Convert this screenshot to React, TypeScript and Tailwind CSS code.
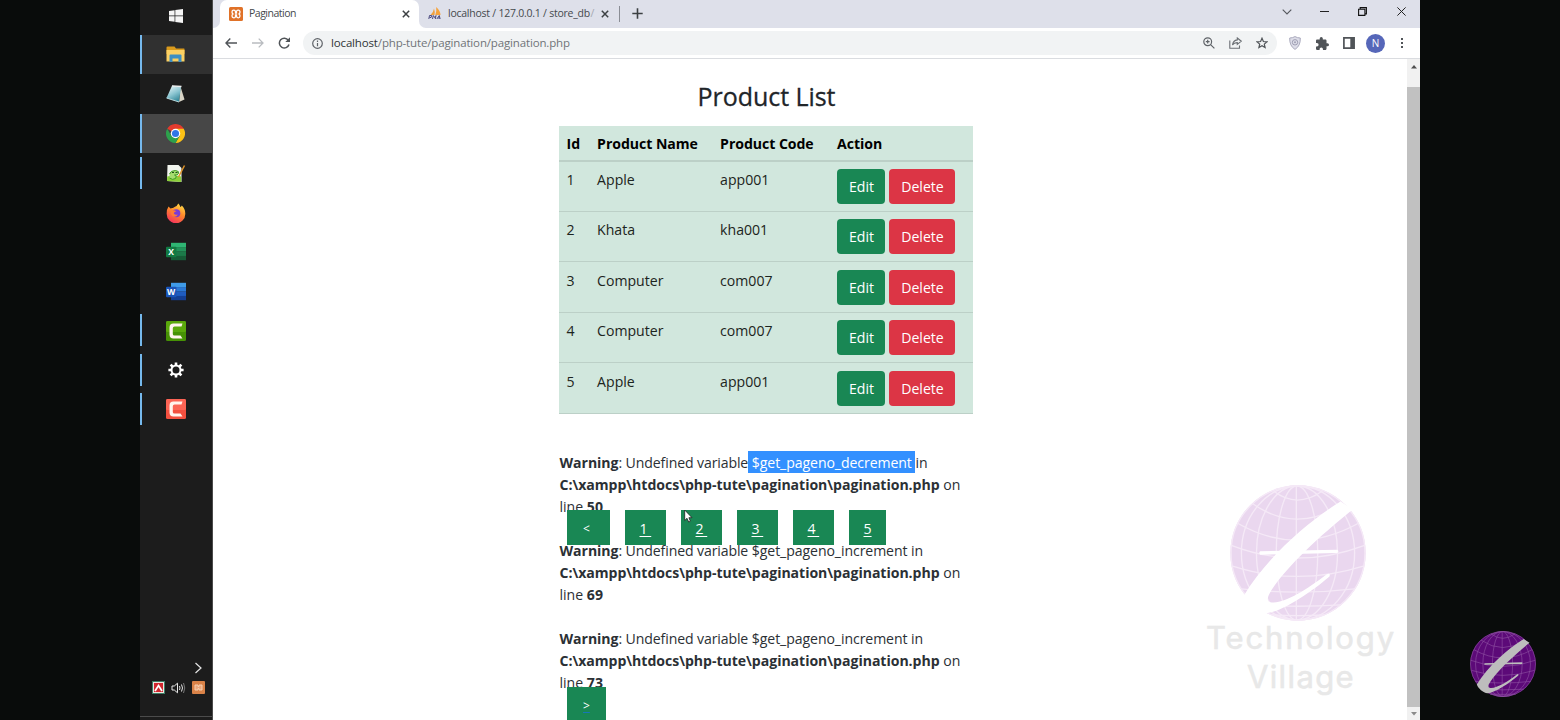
import React from "react";

const PRODUCTS = [
  { id: 1, name: "Apple", code: "app001" },
  { id: 2, name: "Khata", code: "kha001" },
  { id: 3, name: "Computer", code: "com007" },
  { id: 4, name: "Computer", code: "com007" },
  { id: 5, name: "Apple", code: "app001" },
];

/* ---------- taskbar icons ---------- */

const WindowsIcon = () => (
  <svg width="14" height="14" viewBox="0 0 14 14" fill="#f4f4f4">
    <path d="M0 2 5.6 1.2V6.6H0zM6.3 1.1 14 0v6.6H6.3zM0 7.3h5.6v5.5L0 12zM6.3 7.3H14V14L6.3 12.9z" />
  </svg>
);

const FolderIcon = () => (
  <svg width="19" height="17" viewBox="0 0 19 17">
    <path d="M.5 1.5Q.5.5 1.5.5h7l1.5 2h8q.5 0 .5.5v5H.5z" fill="#d99a1c" />
    <path d="M.5 4h18v11.5H.5z" fill="#fbd063" />
    <path d="M3.5 16V9.5q0-1 1-1h10q1 0 1 1V16h-3v-3.500h-6V16z" fill="#3d8fc4" />
  </svg>
);

const NotepadIcon = () => (
  <svg width="19" height="18" viewBox="0 0 19 18">
    <defs>
      <linearGradient id="np" x1="0.200" y1="0" x2="0.700" y2="1">
        <stop offset="0" stopColor="#e4f3f5" />
        <stop offset="0.500" stopColor="#8cc6d2" />
        <stop offset="1" stopColor="#2f8496" />
      </linearGradient>
    </defs>
    <path d="M14.500 1.500 18.500 14.500 13 17z" fill="#d8d4c6" />
    <path d="M6 .8 15 1.500 13 17 .5 13z" fill="url(#np)" />
    <path d="M6 .8 15.500 1.500" stroke="#eee" strokeWidth="1.300" />
    <path d="M.5 13 13 17" stroke="#b9d8dc" />
  </svg>
);

const ChromeIcon = () => (
  <svg width="19" height="19" viewBox="0 0 48 48">
    <path d="M24 24 3.200 12A24 24 0 0 1 44.800 12z" fill="#e33b2e" />
    <path d="M24 12H44.800A24 24 0 0 1 24 48L34.400 30z" fill="#fbc116" />
    <path d="M3.200 12 13.600 30 24 36 34.400 30 24 48A24 24 0 0 1 3.200 12z" fill="#2da14c" />
    <circle cx="24" cy="24" r="12" fill="#fff" />
    <circle cx="24" cy="24" r="9" fill="#2f76e8" />
  </svg>
);

const NotepadPlusIcon = () => (
  <svg width="20" height="19" viewBox="0 0 20 19">
    <path d="M1.500 1h11l3 3V18L1 17z" fill="#f2f5ee" />
    <path d="M1.200 12.500q7-2 14 0V18L1 17z" fill="#8ccf3a" />
    <path d="M3.500 10q1-3.500 6-3.500 4 .5 3 3-1 2-4 1.500 3 1 1 3.500-3 2-6-.5" fill="#a6dc70" stroke="#3b9a22" strokeWidth="1" />
    <path d="M6 8.500h2M9.500 8.500h2" stroke="#1d4d18" strokeWidth="1.200" />
    <path d="M18.500 1.500 12.500 13" stroke="#e0952a" strokeWidth="1.500" />
  </svg>
);

const FirefoxIcon = () => (
  <svg width="20" height="20" viewBox="0 0 20 20">
    <defs>
      <linearGradient id="ff" x1="0.800" y1="0" x2="0.300" y2="1">
        <stop offset="0" stopColor="#ffe14a" />
        <stop offset="0.450" stopColor="#ff8a2a" />
        <stop offset="1" stopColor="#f5315d" />
      </linearGradient>
    </defs>
    <path d="M2.500 3.500 4.500 5.500Q5.500 4.800 7 5q1-1 2.500-1.500Q11 3 12.300.5q1.500 1.300 2 3.500 1-.2 1.500-1.500 3.700 3.500 3.500 8.500A9.300 9.300 0 0 1 .7 11Q.5 6.500 2.500 3.500z" fill="url(#ff)" />
    <circle cx="10.300" cy="10.300" r="4" fill="#7a3bd6" />
    <path d="M5 8q2.500-1.500 5.500.3-2.500.2-2.700 2.200 1.500 2 4 1-1.500 3-4.800 2Q4.500 12 5 8z" fill="#ff7a35" />
  </svg>
);

const OfficeIcon = ({ letter, a, b, c, d, tile }: { letter: string; a: string; b: string; c: string; d: string; tile: string }) => (
  <svg width="20" height="19" viewBox="0 0 20 19">
    <path d="M5 .8h15v4.500H5z" fill={a} />
    <path d="M5 5.100h15v4.500H5z" fill={b} />
    <path d="M5 9.500h15v4.500H5z" fill={c} />
    <path d="M5 13.900h15v4.300H5z" fill={d} />
    <rect x="0" y="4.700" width="10.500" height="10.500" rx="1" fill={tile} />
    <text x="5.200" y="12.900" textAnchor="middle" fontSize="8.500" fontWeight="700" fill="#fff" fontFamily="Open Sans, sans-serif">
      {letter}
    </text>
  </svg>
);

const CamtasiaIcon = ({ top, bottom }: { top: string; bottom: string }) => (
  <svg width="20" height="20" viewBox="0 0 20 20">
    <rect width="20" height="20" rx="1.500" fill={bottom} />
    <rect width="20" height="11" rx="1.500" fill={top} />
    <path d="M16.500 2.500 15.500 5.500H8.500Q6.800 5.500 6.800 7.200V13Q6.800 14.500 8.500 14.500H14.500L16.500 17.500H7.500Q3.500 17.500 3.500 13.500V6.500Q3.500 2.500 7.500 2.500z" fill="#fff4ee" />
  </svg>
);

const GearIcon = () => (
  <svg width="16" height="16" viewBox="0 0 16 16">
    <g stroke="#fff" strokeWidth="2.600">
      <path d="M8 .4V3M8 13v2.600M.4 8H3M13 8h2.600M2.600 2.600 4.500 4.500M11.500 11.500 13.400 13.400M13.400 2.600 11.500 4.500M4.500 11.500 2.600 13.400" />
    </g>
    <circle cx="8" cy="8" r="4.500" fill="none" stroke="#fff" strokeWidth="2" />
  </svg>
);

const TASKS: { icon: React.ReactNode; active?: string; bar?: boolean }[] = [
  { icon: <FolderIcon />, active: "bg-[#303030]", bar: true },
  { icon: <NotepadIcon /> },
  { icon: <ChromeIcon />, active: "bg-[#474747]", bar: true },
  { icon: <NotepadPlusIcon />, bar: true },
  { icon: <FirefoxIcon /> },
  { icon: <OfficeIcon letter="X" a="#2fb573" b="#23935a" c="#1c7a49" d="#175c37" tile="#127a42" /> },
  { icon: <OfficeIcon letter="W" a="#3f9be8" b="#2b79d6" c="#1f5cc0" d="#143f94" tile="#1a54b8" /> },
  { icon: <CamtasiaIcon top="#5aa80c" bottom="#469105" />, bar: true },
  { icon: <GearIcon />, bar: true },
  { icon: <CamtasiaIcon top="#fb6455" bottom="#f2503f" />, bar: true },
];

function Taskbar() {
  return (
    <div className="flex h-full w-[73px] shrink-0 flex-col border-r border-[#4a4a4a] bg-[#1c1c1c]">
      <div className="flex h-[35px] shrink-0 items-start justify-center pt-[9px]">
        <WindowsIcon />
      </div>
      {TASKS.map((t, i) => (
        <div key={i} className={`flex h-[39.4px] shrink-0 items-center ${t.active ?? ""}`}>
          <div className={`w-[2px] shrink-0 ${t.active ? "h-full" : "h-[32px]"} ${t.bar ? "bg-[#76b9ed]" : ""}`} />
          <div className="flex flex-1 justify-center pr-[3px] pt-[0.500px]">{t.icon}</div>
        </div>
      ))}
      <div className="mt-auto flex flex-col">
        <div className="flex justify-end pr-[9px]">
          <svg width="9" height="12" viewBox="0 0 9 12" fill="none" stroke="#e5e5e5" strokeWidth="1.200">
            <path d="M1.500 1 7 6 1.500 11" />
          </svg>
        </div>
        <div className="mt-[7px] flex items-center pl-[12px]">
          <svg width="13" height="13" viewBox="0 0 13 13">
            <rect width="13" height="13" fill="#3d8067" />
            <rect x="1" y="1" width="11" height="11" fill="#f0e4e0" />
            <rect x="2" y="2" width="9" height="9" fill="#d0282e" />
            <path d="M3 10 6.500 4.500 10 10" fill="none" stroke="#fff" strokeWidth="1.700" />
          </svg>
          <svg className="ml-[6px]" width="15" height="12" viewBox="0 0 15 12" fill="none" stroke="#e8e8e8">
            <path d="M1 4h2.300L6.500 1.200v9.600L3.300 8H1z" />
            <path d="M8.500 4q1 2 0 4M10.500 2.500q2 3.500 0 7" />
            <path d="M12.500 1q2.500 5 0 10" stroke="#777" />
          </svg>
          <svg className="ml-[6px]" width="13" height="13" viewBox="0 0 13 13">
            <rect width="13" height="13" rx="1" fill="#d98248" />
            <path d="M3 4h3v1.500h1V4h3v5H7V7.500H6V9H3z" fill="#eaa77c" stroke="#f6cfb0" strokeWidth="1" />
          </svg>
        </div>
        <div className="mt-[22px] h-px bg-[#4b4b4b]" />
        <div className="h-[3px]" />
      </div>
    </div>
  );
}

/* ---------- browser chrome ---------- */

const CloseGlyph = () => (
  <svg className="shrink-0" width="8" height="8" viewBox="0 0 8 8" stroke="#3c4043" strokeWidth="1.500">
    <path d="M.8.8 7.200 7.200M7.200.8.8 7.200" />
  </svg>
);

function TabStrip() {
  return (
    <div className="flex h-[28px] shrink-0 bg-[#dee0ea] text-[10.500px] text-[#45494d]">
      <div className="flex w-[7px] items-stretch bg-white">
        <div className="w-full rounded-br-[7px] bg-[#dee0ea]" />
      </div>
      <div className="flex h-full w-[199px] items-center rounded-t-[7px] bg-white pl-[9px] pr-[9px] pb-[1px]">
        <svg width="14" height="14" viewBox="0 0 14 14">
          <rect width="14" height="14" rx="1.500" fill="#e07228" />
          <path d="M4.800 3.200Q3 3.200 3 5q0 1.300 1 2-1 .7-1 2 0 1.800 1.800 1.800T6.500 9V8h1v1q0 1.800 1.700 1.800T11 9q0-1.300-1-2 1-.7 1-2 0-1.800-1.800-1.800T7.500 5v1h-1V5q0-1.800-1.700-1.800z" fill="none" stroke="#fff" strokeWidth="1.300" />
        </svg>
        <span className="ml-[6px] flex-1 tracking-[-0.500px]">Pagination</span>
        <CloseGlyph />
      </div>
      <div className="flex w-[7px] items-stretch bg-white">
        <div className="w-full rounded-bl-[7px] bg-[#dee0ea]" />
      </div>
      <div className="flex w-[193px] items-center pb-[1px] pl-[2px]">
        <svg className="shrink-0" width="14" height="13" viewBox="0 0 14 13">
          <path d="M2.500 8Q5.500 5 6 1.500 7.300 5 6.500 8z" fill="#f0a040" />
          <path d="M7.300 8Q8.800 4 8.200 0 12.500 4 12.500 8z" fill="#f6a33c" />
          <path d="M.8 12 1.500 8.500h2.200l-.6 2H1.500M4.500 12l.8-3.500 1.200 2 1.500-2L7.300 12M8.800 12l2.500-3.500.8 3.500M9.800 11h2.200" fill="none" stroke="#4d4b80" strokeWidth="1" />
        </svg>
        <span className="ml-[6px] w-[153px] whitespace-nowrap tracking-[-0.240px]">
          localhost / 127.0.0.1 / store_db <span className="-ml-[2px] text-[#a5a8b0]">/</span>
        </span>
        <CloseGlyph />
      </div>
      <div className="flex items-center pb-[1px]">
        <div className="h-[16px] w-px bg-[#8a8d95]" />
        <svg className="ml-[12px]" width="11" height="11" viewBox="0 0 11 11" stroke="#3c4043" strokeWidth="1.600">
          <path d="M5.500.3v10.400M.3 5.500h10.400" />
        </svg>
      </div>
      <div className="ml-auto flex items-start pr-[14px] pt-[7px]">
        <svg className="mr-[28px] mt-[2px]" width="10" height="6" viewBox="0 0 10 6" fill="none" stroke="#55585d" strokeWidth="1.100">
          <path d="M.7.7 5 5 9.300.7" />
        </svg>
        <svg className="mr-[29px] mt-[4px]" width="9" height="2" viewBox="0 0 9 2">
          <path d="M0 .5h9" stroke="#222" strokeWidth="1" />
        </svg>
        <svg className="mr-[30px]" width="9" height="9" viewBox="0 0 9 9" fill="none" stroke="#111" strokeWidth="1.100">
          <path d="M.6 2.200h6.300v6.200H.6zM2.200 2V.6h6.200v6.300H7" />
        </svg>
        <svg width="9" height="9" viewBox="0 0 9 9" stroke="#222" strokeWidth="1">
          <path d="M.4.4 8.600 8.600M8.600.4.4 8.600" />
        </svg>
      </div>
    </div>
  );
}

function Toolbar() {
  return (
    <div className="flex h-[31px] shrink-0 items-center border-b border-[#dadce0] bg-white pl-[12px]">
      <svg width="12" height="10" viewBox="0 0 12 10" fill="none" stroke="#505458" strokeWidth="1.400">
        <path d="M5.300.6 1 5l4.300 4.400M1 5h11" />
      </svg>
      <svg className="ml-[15px]" width="12" height="10" viewBox="0 0 12 10" fill="none" stroke="#b9bcc0" strokeWidth="1.300">
        <path d="M6.700.6 11 5 6.700 9.400M11 5H0" />
      </svg>
      <svg className="ml-[14px]" width="13" height="12" viewBox="0 0 13 12">
        <path d="M10.300 3.200A4.900 4.900 0 1 0 11 7.500" fill="none" stroke="#505458" strokeWidth="1.500" />
        <path d="M12 .3V5H7.300z" fill="#505458" />
      </svg>
      <div className="ml-[12px] flex h-[24px] w-[974px] items-center rounded-full bg-[#f1f3f4] pl-[9px] pr-[9px]">
        <svg width="11" height="11" viewBox="0 0 11 11" fill="none" stroke="#5f6368" strokeWidth="1.200">
          <circle cx="5.500" cy="5.500" r="4.800" />
          <path d="M5.500 5v3.200M5.500 2.600v1.400" />
        </svg>
        <span className="ml-[8px] whitespace-nowrap text-[11.500px] tracking-[-0.150px] text-[#707478]">
          <span className="text-[#303336]">localhost</span>/php-tute/pagination/pagination.php
        </span>
        <svg className="ml-auto" width="12" height="12" viewBox="0 0 12 12" fill="none" stroke="#5f6368" strokeWidth="1.200">
          <circle cx="4.700" cy="4.700" r="3.900" />
          <path d="M7.600 7.600 11.400 11.400M2.800 4.700h3.800M4.700 2.800v3.800" />
        </svg>
        <svg className="ml-[14px]" width="13" height="12" viewBox="0 0 13 12" fill="none" stroke="#6b6f74" strokeWidth="1.100">
          <path d="M.8 3.500v7.800h9.700V8.500" />
          <path d="M8.300 1 12.300 4.200 8.300 7.400V5.600Q5 5.500 3.500 8 4 3.500 8.300 2.900z" />
        </svg>
        <svg className="ml-[14px]" width="12" height="12" viewBox="0 0 12 12" fill="none" stroke="#505458" strokeWidth="1.200">
          <path d="M6 1.200 7.400 4.500 11 4.800 8.300 7.100 9.100 10.600 6 8.700 2.900 10.600 3.700 7.100 1 4.800 4.600 4.500z" />
        </svg>
      </div>
      <svg className="ml-[12px]" width="12" height="14" viewBox="0 0 12 14">
        <path d="M6 .6Q8.500 2 11.300 2 11.600 10 6 13.400.4 10 .7 2 3.500 2 6 .6z" fill="#dddde8" stroke="#aaaabd" />
        <circle cx="6" cy="6.300" r="2.700" fill="none" stroke="#a0a0b4" />
        <circle cx="6" cy="6.300" r="1" fill="#a0a0b4" />
      </svg>
      <svg className="ml-[15px]" width="13" height="13" viewBox="2 1 21 21" fill="#505458">
        <path d="M20.500 11H19V7c0-1.100-.9-2-2-2h-4V3.500a2.500 2.500 0 0 0-5 0V5H4c-1.100 0-1.990.9-1.990 2v3.800H3.500a2.700 2.700 0 0 1 0 5.400H2V20c0 1.100.9 2 2 2h3.800v-1.500a2.700 2.700 0 0 1 5.400 0V22H17c1.100 0 2-.9 2-2v-4h1.500a2.500 2.500 0 0 0 0-5z" />
      </svg>
      <svg className="ml-[14px]" width="12" height="12" viewBox="0 0 12 12">
        <path d="M.9.900h10.200v10.200H.9z" fill="none" stroke="#505458" strokeWidth="1.700" />
        <path d="M7.300 1H11v10H7.300z" fill="#505458" />
      </svg>
      <div className="ml-[11px] flex size-[19px] items-center justify-center rounded-full bg-[#5667b9] text-[10px] text-white">N</div>
      <div className="ml-[16px] flex flex-col gap-[2px]">
        <div className="size-[2px] bg-[#505458]" />
        <div className="size-[2px] bg-[#505458]" />
        <div className="size-[2px] bg-[#505458]" />
      </div>
    </div>
  );
}

/* ---------- page content ---------- */

const GRID = "grid grid-cols-[30.5px_123px_117px_1fr]";

function ProductTable() {
  return (
    <div className="w-[414px] bg-[#d1e7dd] text-[14.100px] text-[#1c2420]">
      <div className={`${GRID} h-[35.500px] border-b-2 border-[#bcd0c7] font-bold text-black`}>
        {["Id", "Product Name", "Product Code", "Action"].map((h) => (
          <div key={h} className="whitespace-nowrap pl-[7.600px] pt-[7px] leading-[22px] tracking-[-0.050px]">{h}</div>
        ))}
      </div>
      {PRODUCTS.map((p) => (
        <div key={p.id} className={`${GRID} h-[50.450px] border-b border-[#bcd0c7]`}>
          <div className="pl-[7.600px] pt-[7.500px] leading-[22px]">{p.id}</div>
          <div className="pl-[7.600px] pt-[7.500px] leading-[22px]">{p.name}</div>
          <div className="pl-[7.600px] pt-[7.500px] leading-[22px]">{p.code}</div>
          <div className="flex gap-[4px] pl-[7.500px] pt-[7.500px] text-white">
            <div className="flex h-[35px] w-[48px] items-center justify-center rounded-[4px] bg-[#198754] pl-px pt-[0.500px]">Edit</div>
            <div className="flex h-[35px] w-[66px] items-center justify-center rounded-[4px] bg-[#dc3545] pl-px pt-[0.500px]">Delete</div>
          </div>
        </div>
      ))}
    </div>
  );
}

function Warning({ variable, line, selected }: { variable: string; line: number; selected?: boolean }) {
  return (
    <div className="-mb-px whitespace-nowrap pl-[0.500px] pt-px">
      <div className="flex">
        <b className="tracking-[-0.050px]">Warning</b>
        <span className="whitespace-pre tracking-[-0.120px]">: Undefined variable</span>
        <span className={`-mt-px h-[22px] whitespace-pre pt-px tracking-[-0.080px] ${selected ? "bg-[#3390ff] text-white" : ""}`}>{` ${variable} `}</span>
        <span>in</span>
      </div>
      <div className="h-[22px]">
        <b className="tracking-[-0.040px]">C:\xampp\htdocs\php-tute\pagination\pagination.php</b> on
      </div>
      <div className="h-[22px]">
        line <b>{line}</b>
      </div>
    </div>
  );
}

function Pager() {
  return (
    <div className="relative z-10 flex h-[22px] items-center gap-[15px] pl-[8px] text-white">
      <div className="flex h-[35px] w-[43px] shrink-0 items-center bg-[#198754] pl-[16px] pt-[3px] text-[12px]">&lt;</div>
      {[1, 2, 3, 4].map((n) => (
        <div key={n} className="flex h-[35px] w-[41px] shrink-0 items-center whitespace-pre bg-[#198754] pl-[14.500px] pt-[2px] underline underline-offset-2">{`${n} `}</div>
      ))}
      <div className="flex h-[35px] w-[37px] shrink-0 items-center bg-[#198754] pl-[14.500px] pt-[2px] underline underline-offset-2">5</div>
    </div>
  );
}

function Globe({ size, fill, line, mark }: { size: number; fill: string; line: string; mark: string }) {
  return (
    <svg width={size} height={size} viewBox="0 0 406 406">
      <circle cx="203" cy="203" r="202" fill={fill} />
      <g fill="none" stroke={line} strokeWidth="4">
        <circle cx="203" cy="203" r="200" />
        <ellipse cx="200" cy="203" rx="62" ry="200" />
        <ellipse cx="200" cy="203" rx="121" ry="200" />
        <ellipse cx="203" cy="203" rx="169" ry="200" />
        <path d="M198 3V403" />
        <path d="M130 18Q200 72 276 18M68 56Q200 148 338 56M24 115Q200 215 382 115M4 180Q200 256 402 180M8 242Q200 304 398 242M34 310Q200 330 372 310M75 358Q200 366 331 358M125 388Q200 392 281 388" />
      </g>
      <path d="M330 49C235 108 110 215 42 329C50 352 80 381 108 383C155 378 240 322 297 273Q301 261 288 267C230 312 170 348 130 351C108 351 108 338 125 312C170 243 270 150 366 73Z" fill={mark} />
      <path d="M90 198 320 193Q327 198 320 203L90 208Q85 203 90 198Z" fill={mark} />
    </svg>
  );
}

function PageView() {
  return (
    <div className="flex min-h-0 flex-1 overflow-hidden bg-white">
      <div className="flex flex-1 flex-col pl-[346px] text-[14.100px] leading-[22px] text-[#2b3035]">
        <h1 className="mt-[19px] w-[415px] text-center text-[25px] font-medium leading-[36px] tracking-[-0.050px] text-[#212529] [-webkit-text-stroke:0.3px_#212529]">
          Product List
        </h1>
        <div className="mt-[12px]">
          <ProductTable />
        </div>
        <div className="mt-[37.250px]">
          <Warning variable="$get_pageno_decrement" line={50} selected />
          <Pager />
          <Warning variable="$get_pageno_increment" line={69} />
          <div className="h-[22px]" />
          <Warning variable="$get_pageno_increment" line={73} />
          <div className="relative z-10 flex h-[22px] items-center pl-[8px] pt-px text-white">
            <div className="flex h-[35px] w-[39px] shrink-0 items-center bg-[#198754] pl-[16px] pt-[3px] text-[12px]">
              <span className="underline decoration-[#1677b8] underline-offset-2">&gt;</span>
            </div>
          </div>
        </div>
      </div>
      <div className="flex w-[13px] shrink-0 flex-col items-center bg-[#f1f1f1]">
        <svg className="mt-[6px]" width="6" height="4" viewBox="0 0 6 4"><path d="M0 3.500 3 0 6 3.500z" fill="#505050" /></svg>
        <div className="mt-[18px] h-[620px] w-full bg-[#c1c1c1]" />
        <svg className="mt-[5px]" width="6" height="4" viewBox="0 0 6 4"><path d="M0 0 3 3.500 6 0z" fill="#8a8a8a" /></svg>
      </div>
    </div>
  );
}

export default function App() {
  return (
    <div className="relative flex h-[720px] w-[1560px] overflow-hidden bg-[#090c0b] font-['Open_Sans','Noto_Sans',sans-serif]">
      <div className="w-[140px] shrink-0" />
      <Taskbar />
      <div className="flex w-[1207px] shrink-0 flex-col">
        <TabStrip />
        <Toolbar />
        <PageView />
      </div>

      {/* channel watermark */}
      <div className="absolute left-[1201px] top-[485px] flex w-[200px] flex-col items-center font-['Inter',sans-serif] text-[31px] font-normal leading-[39px] text-[#e8e8e8] [-webkit-text-stroke:0.6px_#e8e8e8]">
        <div className="mr-[6px]">
          <Globe size={136} fill="#ead7ef" line="#f5e9f7" mark="#ffffff" />
        </div>
        <div className="-mt-[3px] whitespace-nowrap tracking-[1.900px]">Technology</div>
        <div className="whitespace-nowrap tracking-[1.400px]">Village</div>
      </div>

      {/* channel badge */}
      <div className="absolute left-[1470px] top-[631px]">
        <Globe size={66} fill="#5c0a78" line="#8d4fa0" mark="#bdbdbd" />
      </div>

      {/* mouse pointer */}
      <svg className="absolute left-[684px] top-[509px] z-20" width="9" height="14" viewBox="0 0 9 14">
        <path d="M.7 1v10.500L3 9.300 4.700 13l1.700-.8L4.900 8.700H8z" fill="#fff" stroke="#222" strokeWidth=".8" />
      </svg>
    </div>
  );
}
